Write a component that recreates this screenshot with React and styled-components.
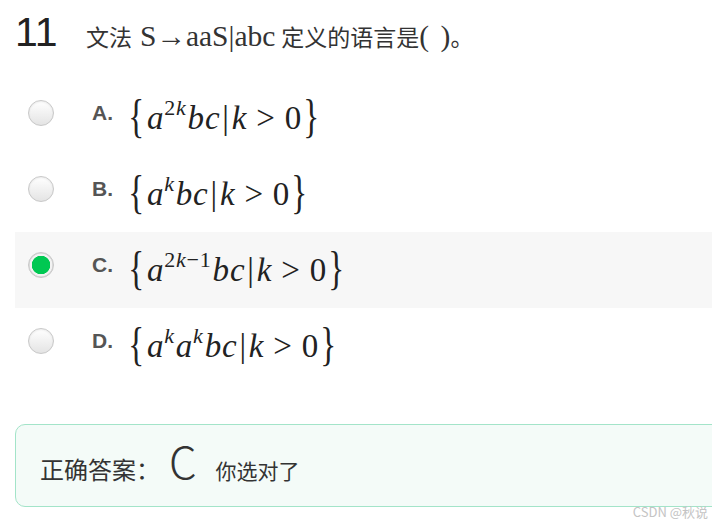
import React from "react";
import styled, { createGlobalStyle } from "styled-components";

const Global = createGlobalStyle`
  html, body { margin: 0; padding: 0; background: #fff; overflow: hidden; }
  * { box-sizing: border-box; }
`;

const Page = styled.div`
  position: relative;
  width: 712px;
  height: 525px;
  overflow: hidden;
  display: flex;
  flex-direction: column;
`;

const Header = styled.div`
  height: 80px;
  display: flex;
  align-items: baseline;
  padding: 10px 0 0 15px;
`;

const QNum = styled.span`
  width: 71px;
  font-family: "Liberation Sans", Arial, sans-serif;
  font-size: 41px;
  line-height: 44px;
  color: #222;
`;

const QText = styled.span`
  font-family: "Liberation Serif", "Noto Sans CJK SC", serif;
  font-size: 23px;
  color: #333;
`;

const Latin = styled.span`
  font-family: "Liberation Serif", serif;
  font-size: 29.5px;
  margin: 0 ${(p) => (p.$tight ? "0" : "6px 0 8px")};
  word-spacing: ${(p) => (p.$tight ? "4px" : "0")};
`;

const List = styled.div`
  display: flex;
  flex-direction: column;
  margin-left: 15px;
`;

const Row = styled.div`
  height: 76px;
  display: flex;
  align-items: center;
  padding: 0 0 10px 13px;
  background: ${(p) => (p.$active ? "#f7f7f7" : "transparent")};
`;

const Radio = styled.span`
  flex: none;
  width: 26px;
  height: 26px;
  border-radius: 50%;
  border: 1px solid #c8c8c8;
  background: ${(p) =>
    p.$checked
      ? "radial-gradient(circle, #00c852 0 9px, #f2f2f2 9.5px 11px, #dcdcdc 11.5px)"
      : "linear-gradient(#ffffff, #e4e4e4)"};
  box-shadow: ${(p) => (p.$checked ? "none" : "inset 0 1px 2px rgba(0,0,0,0.08)")};
`;

const Letter = styled.span`
  width: 36px;
  margin-left: 38px;
  font-family: "Liberation Sans", Arial, sans-serif;
  font-weight: bold;
  font-size: 21px;
  color: #555;
`;

const MathBox = styled.span`
  display: inline-flex;
  align-items: baseline;
  font-family: "Liberation Serif", "Times New Roman", serif;
  font-size: 33px;
  color: #222;
  white-space: nowrap;
  letter-spacing: 0.8px;
`;

const Brace = styled.span`
  font-style: normal;
  font-size: 46px;
  display: inline-block;
  transform: scaleX(0.72) translateY(3px);
  margin: 0 ${(p) => (p.$right ? "0 0 -2px" : "-1px 0 -3px")};
`;

const V = styled.span`
  font-style: italic;
`;

const Up = styled.span`
  font-style: normal;
`;

const Sup = styled.span`
  font-size: 22px;
  position: relative;
  top: -14px;
  margin-right: 1px;
`;

const Bar = styled.span`
  font-style: normal;
  margin: 0 2px;
`;

const Op = styled.span`
  font-style: normal;
  margin: 0 9px;
`;

const AnswerBox = styled.div`
  margin: 40px 0 0 15px;
  width: 720px;
  height: 83px;
  border: 1px solid #a3e4c9;
  border-radius: 10px;
  background: #f4fbf8;
  display: flex;
  align-items: baseline;
  padding: 13px 0 0 24px;
  font-family: "Noto Sans CJK SC", "Noto Sans", sans-serif;
  color: #333;
`;

const AnsLabel = styled.span`
  font-size: 24px;
`;

const AnsLetter = styled.span`
  font-size: 44px;
  font-weight: 300;
  margin: 0 19px 0 9px;
  line-height: 1;
`;

const AnsNote = styled.span`
  font-size: 21px;
`;

const Watermark = styled.span`
  position: absolute;
  right: 4px;
  bottom: 4px;
  font-family: "Noto Sans CJK SC", "Noto Sans", sans-serif;
  font-size: 13px;
  color: #c4c4c4;
`;

const options = [
  {
    key: "A",
    body: (
      <>
        <V>a</V>
        <Sup>
          <Up>2</Up>
          <V>k</V>
        </Sup>
        <V>bc</V>
      </>
    ),
  },
  {
    key: "B",
    body: (
      <>
        <V>a</V>
        <Sup>
          <V>k</V>
        </Sup>
        <V>bc</V>
      </>
    ),
  },
  {
    key: "C",
    active: true,
    body: (
      <>
        <V>a</V>
        <Sup>
          <Up>2</Up>
          <V>k</V>
          <Up>−1</Up>
        </Sup>
        <V>bc</V>
      </>
    ),
  },
  {
    key: "D",
    body: (
      <>
        <V>a</V>
        <Sup>
          <V>k</V>
        </Sup>
        <V>a</V>
        <Sup>
          <V>k</V>
        </Sup>
        <V>bc</V>
      </>
    ),
  },
];

export default function App() {
  return (
    <Page>
      <Global />
      <Header>
        <QNum>11</QNum>
        <QText>
          文法<Latin>S→aaS|abc</Latin>定义的语言是<Latin $tight>( )</Latin>。
        </QText>
      </Header>
      <List>
        {options.map((o) => (
          <Row key={o.key} $active={o.active}>
            <Radio $checked={o.active} />
            <Letter>{o.key}.</Letter>
            <MathBox>
              <Brace>{"{"}</Brace>
              {o.body}
              <Bar>|</Bar>
              <V>k</V>
              <Op>&gt;</Op>
              <Up>0</Up>
              <Brace $right>{"}"}</Brace>
            </MathBox>
          </Row>
        ))}
      </List>
      <AnswerBox>
        <AnsLabel>正确答案：</AnsLabel>
        <AnsLetter>C</AnsLetter>
        <AnsNote>你选对了</AnsNote>
      </AnswerBox>
      <Watermark>CSDN @秋说</Watermark>
    </Page>
  );
}
